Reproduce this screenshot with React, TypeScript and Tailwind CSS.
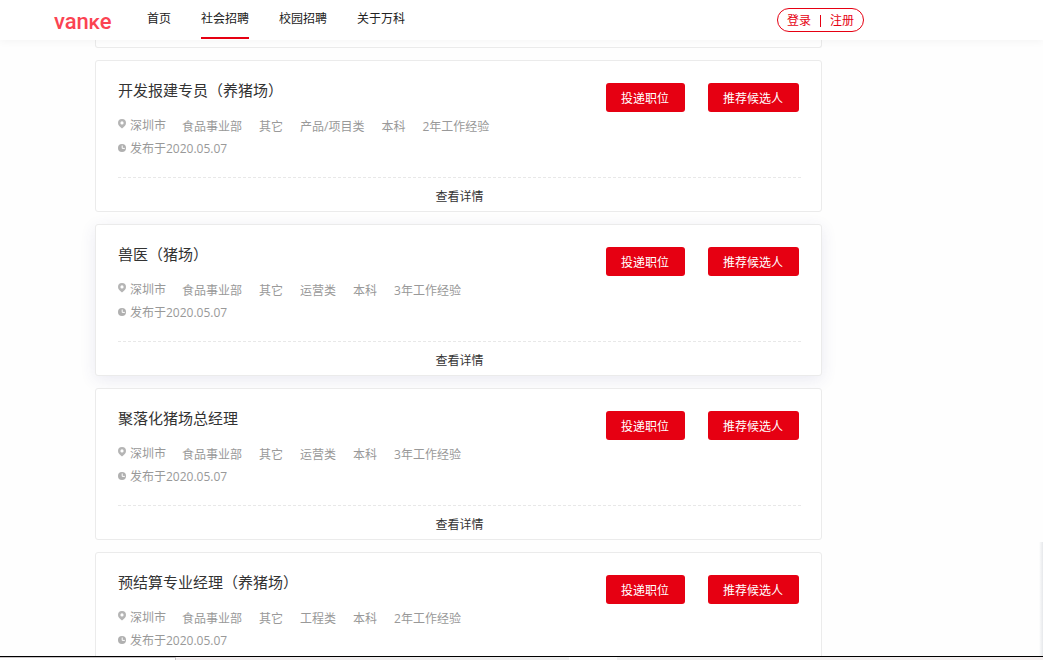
type Job = {
  title: string;
  tags: string[];
  raised?: boolean;
};

const NAV = ['首页', '社会招聘', '校园招聘', '关于万科'];
const ACTIVE = '社会招聘';

const JOBS: Job[] = [
  { title: '开发报建专员（养猪场）', tags: ['食品事业部', '其它', '产品/项目类', '本科', '2年工作经验'] },
  { title: '兽医（猪场）', tags: ['食品事业部', '其它', '运营类', '本科', '3年工作经验'], raised: true },
  { title: '聚落化猪场总经理', tags: ['食品事业部', '其它', '运营类', '本科', '3年工作经验'] },
  { title: '预结算专业经理（养猪场）', tags: ['食品事业部', '其它', '工程类', '本科', '2年工作经验'] },
];

function PinIcon() {
  return (
    <svg viewBox="0 0 8 10" className="mb-1 h-[10px] w-2 shrink-0" aria-hidden="true">
      <path
        fill="#b5b5b5"
        fillRule="evenodd"
        d="M4 0a4 4 0 0 1 4 4c0 2.500-2 3.900-4 5.400C2 7.900 0 6.500 0 4a4 4 0 0 1 4-4zm0 2.300a1.600 1.600 0 1 0 0 3.200 1.600 1.600 0 0 0 0-3.200z"
      />
    </svg>
  );
}

function ClockIcon() {
  return (
    <svg viewBox="0 0 8 8" className="mb-0.5 h-2 w-2 shrink-0" aria-hidden="true">
      <circle cx="4" cy="4" r="4" fill="#b0b0b0" />
      <path d="M4.200 1.500v2.900h2.600" fill="none" stroke="#fff" strokeWidth="1" />
    </svg>
  );
}

function RedButton({ children }: { children: string }) {
  return (
    <button type="button" className="h-[29px] rounded-[3px] bg-[#e60012] pl-[15px] pr-4 pt-0.5 text-white">
      {children}
    </button>
  );
}

function JobCard({ job }: { job: Job }) {
  return (
    <article
      className={
        job.raised
          ? 'rounded-[3px] border border-[#ebebeb] bg-white pl-[22px] pr-5 shadow-[0_4px_16px_rgba(60,60,140,0.1)]'
          : 'rounded-[3px] border border-[#ebebeb] bg-white pl-[22px] pr-5'
      }
    >
      <div className="flex items-start justify-between border-b border-dashed border-[#e8e8e8] pb-[17px]">
        <div className="pt-[17px]">
          <h2 className="mb-[14px] text-[15px] leading-6 text-[#333]">{job.title}</h2>
          <div className="flex items-start gap-4 leading-[22px] text-[#999]">
            <span className="flex items-center gap-1 leading-5">
              <PinIcon />
              深圳市
            </span>
            <div className="flex gap-[17px]">
              {job.tags.map((tag) => (
                <span key={tag}>{tag}</span>
              ))}
            </div>
          </div>
          <div className="flex items-center gap-1 leading-[22px] text-[#999]">
            <ClockIcon />
            发布于2020.05.07
          </div>
        </div>
        <div className="flex gap-[23px] pr-0.5 pt-[22px]">
          <RedButton>投递职位</RedButton>
          <RedButton>推荐候选人</RedButton>
        </div>
      </div>
      <button type="button" className="block h-[33px] w-full pt-1 text-center text-[#333]">
        查看详情
      </button>
    </article>
  );
}

export default function App() {
  return (
    <div className="flex h-screen flex-col overflow-hidden bg-[#fefefe] font-['Open_Sans','Noto_Sans_CJK_SC',sans-serif] text-[12px]">
      <header className="z-10 shrink-0 bg-white shadow-[0_2px_8px_rgba(0,0,0,0.04)]">
        <div className="flex h-10 max-w-[864px] items-start pl-[54px]">
          <a
            href="#"
            className="w-[93px] pt-2 font-[Roboto,sans-serif] text-[22px] font-medium leading-7 text-[#fb4352]"
          >
            van<span className="text-[20px] [font-variant-caps:small-caps]">k</span>e
          </a>
          <nav className="flex flex-1 gap-[30px]">
            {NAV.map((item) => (
              <a
                key={item}
                href="#"
                className={
                  item === ACTIVE
                    ? 'h-[39px] border-b-2 border-[#e60012] leading-[38px] text-[#222]'
                    : 'h-[39px] leading-[38px] text-[#222]'
                }
              >
                {item}
              </a>
            ))}
          </nav>
          <div className="mt-2 flex h-6 items-center gap-2 rounded-full border border-[#e60012] px-[9px] pt-px text-[#e60012]">
            <a href="#">登录</a>
            <span className="mx-px h-3 w-px bg-[#e60012]" />
            <a href="#">注册</a>
          </div>
        </div>
      </header>

      <div className="flex min-h-0 flex-1">
        <main className="min-w-0 flex-1 overflow-y-auto pl-[95px] [scrollbar-width:none]">
          <div className="flex max-w-[727px] flex-col gap-3">
            <div className="h-2 rounded-b-[3px] border border-t-0 border-[#ebebeb] bg-white" />
            {JOBS.map((job) => (
              <JobCard key={job.title} job={job} />
            ))}
          </div>
        </main>
        <div className="h-[114px] w-1 shrink-0 self-end bg-linear-to-r from-[#fefefe] to-[#e6e8eb]" />
      </div>

      <div className="flex h-1 shrink-0 border-t border-black bg-[#ededed]">
        <div className="w-[176px] border-r border-t border-[#c8c4c6] bg-white" />
        <div className="w-[393px] bg-linear-to-r from-[#f1eced] to-[#ededed]" />
        <div className="w-12 bg-[#fafafa]" />
        <div className="flex-1 bg-linear-to-r from-[#ededed] to-[#f5efef]" />
      </div>
    </div>
  );
}
